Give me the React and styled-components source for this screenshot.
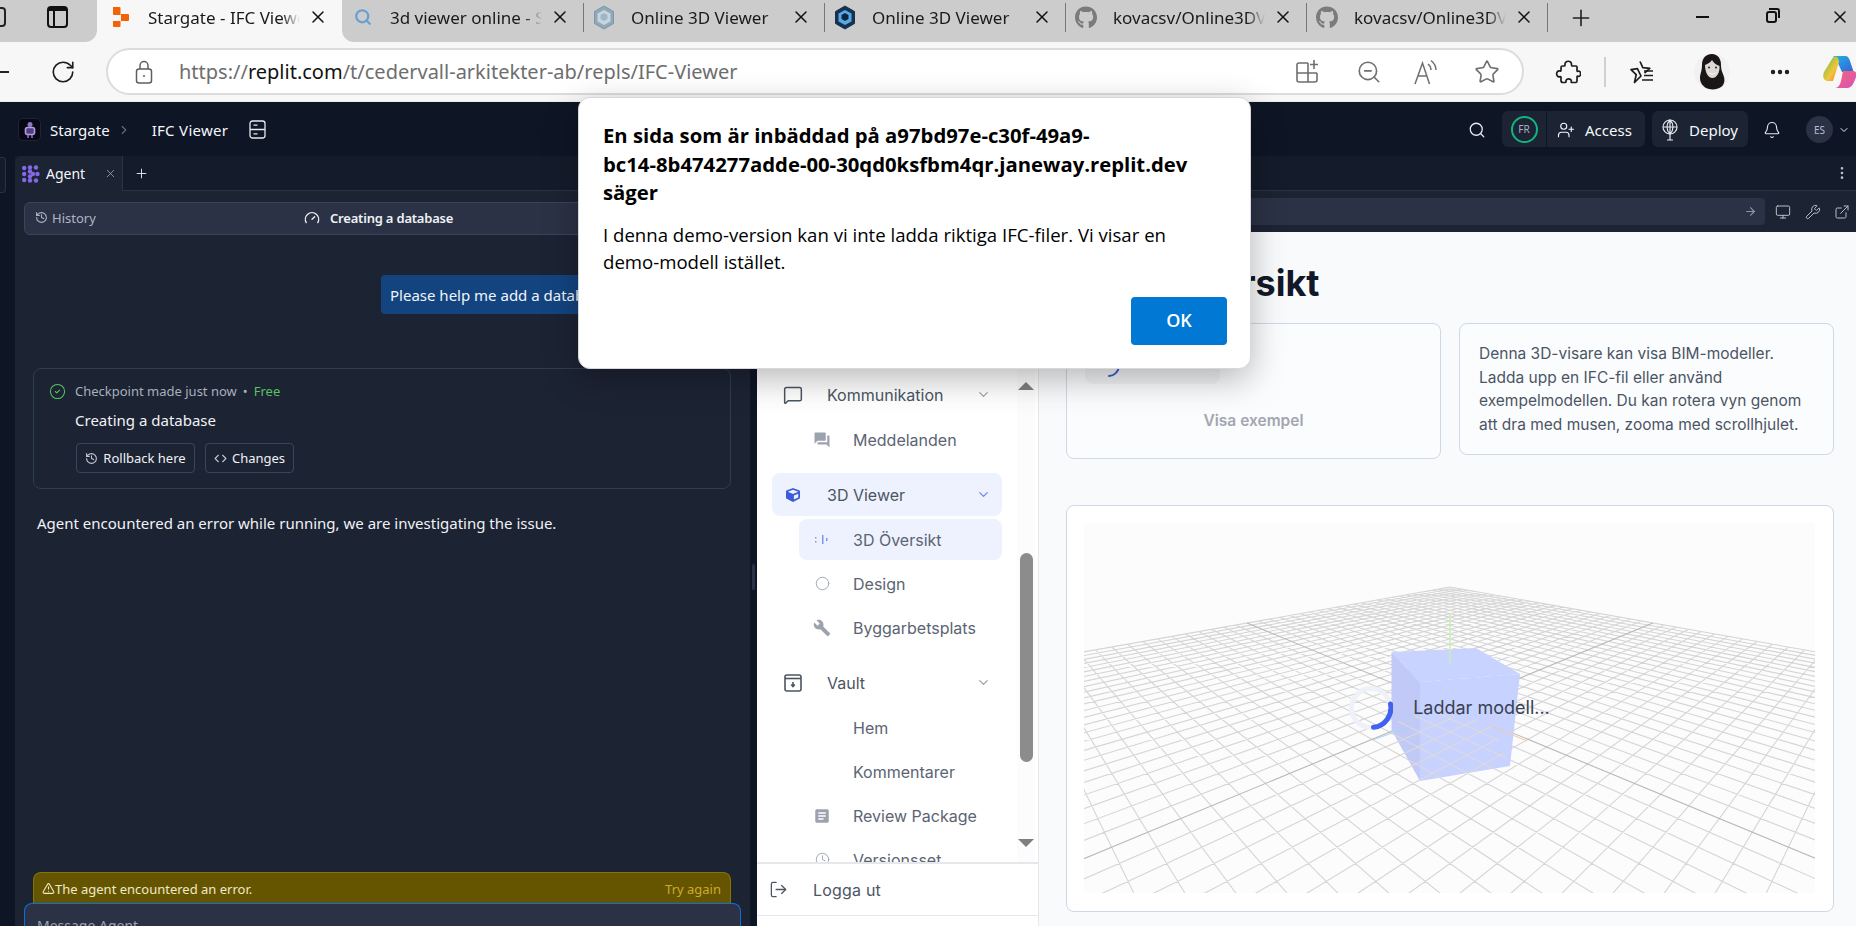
import React, { useMemo } from "react";
import styled, { createGlobalStyle } from "styled-components";
import {
  Search, UserPlus, Bell, ChevronDown, ChevronRight, History, Gauge, Monitor, Wrench,
  ExternalLink, EllipsisVertical, ArrowRight, CircleCheck, Code, TriangleAlert, X, Plus,
  RotateCw, ZoomOut, Star, MessageSquare, Circle, LogOut, Ellipsis, Clock,
} from "lucide-react";
import { FaGithub, FaCube } from "react-icons/fa";
import { MdForum, MdBuild, MdArticle } from "react-icons/md";

const UI = `"Noto Sans", "Open Sans", sans-serif`;
const PLEX = `"Noto Sans", Roboto, sans-serif`;
const INTER = `Inter, "Noto Sans", sans-serif`;

const Global = createGlobalStyle`
  html, body { margin: 0; padding: 0; background: #0e1525; }
  * { box-sizing: border-box; }
`;

const Page = styled.div`
  position: relative;
  width: 1856px;
  height: 926px;
  overflow: hidden;
  display: flex;
  flex-direction: column;
  font-family: ${UI};
`;

/* ---------- browser tab strip ---------- */
const TabStrip = styled.div`
  height: 42px;
  flex: none;
  display: flex;
  background: #f7f7f7;
`;
const StripStart = styled.div`
  width: 97px;
  background: #cccccc;
  border-bottom-right-radius: 12px;
  display: flex;
  align-items: center;
  overflow: hidden;
  padding-left: 47px;
  color: #111;
  position: relative;
`;
const PartialIcon = styled.div`
  position: absolute;
  left: -14px;
  top: 7px;
  width: 20px;
  height: 20px;
  border: 2px solid #222;
  border-radius: 4px;
`;
const WindowGlyph = styled.div`
  width: 21px;
  height: 22px;
  margin-top: -8px;
  border: 2px solid #111;
  border-top-width: 5px;
  border-radius: 4px;
  position: relative;
  &::after {
    content: "";
    position: absolute;
    left: 4px;
    top: 0;
    bottom: 0;
    width: 2px;
    background: #111;
  }
`;
const StripRest = styled.div`
  flex: 1;
  background: #cccccc;
  border-bottom-left-radius: 12px;
  display: flex;
  min-width: 0;
`;
const Tab = styled.div`
  width: ${(p) => (p.$active ? 245 : 241)}px;
  flex: none;
  height: 34px;
  display: flex;
  align-items: center;
  padding-left: ${(p) => (p.$active ? 13 : 10)}px;
  position: relative;
  &::after {
    content: "";
    display: ${(p) => (p.$divider ? "block" : "none")};
    position: absolute;
    left: 0;
    top: 3px;
    height: 29px;
    width: 1px;
    background: #777;
  }
`;
const Fav = styled.div`
  width: 22px;
  height: 24px;
  margin-right: 16px;
  flex: none;
  display: flex;
  align-items: center;
  justify-content: center;
`;
const TabTitle = styled.div`
  width: 152px;
  flex: none;
  overflow: hidden;
  white-space: nowrap;
  font-size: 17px;
  color: #1a1a1a;
  -webkit-mask-image: linear-gradient(90deg, #000 88%, transparent 100%);
  mask-image: linear-gradient(90deg, #000 88%, transparent 100%);
`;
const TabClose = styled.div`
  width: 22px;
  margin-left: 7px;
  display: flex;
  justify-content: center;
  color: #111;
`;
const NewTab = styled.div`
  width: 66px;
  border-left: 1px solid #777;
  margin-top: 3px;
  height: 29px;
  flex: none;
  display: flex;
  align-items: center;
  justify-content: center;
  color: #222;
`;
const WinControls = styled.div`
  flex: 1;
  display: flex;
  height: 34px;
  align-items: center;
  color: #111;
  min-width: 0;
`;
const WinBtn = styled.div`
  width: 40px;
  margin-left: ${(p) => p.$ml}px;
  flex: none;
  display: flex;
  justify-content: center;
`;
const MinusGlyph = styled.div`
  width: 13px;
  height: 2px;
  background: #111;
`;
const RestoreGlyph = styled.div`
  width: 11px;
  height: 12px;
  border: 2px solid #111;
  border-radius: 3px;
  position: relative;
  &::before {
    content: "";
    position: absolute;
    left: 1px;
    top: -5px;
    width: 9px;
    height: 8px;
    border-top: 2px solid #111;
    border-right: 2px solid #111;
    border-radius: 0 3px 0 0;
  }
`;

/* ---------- browser toolbar ---------- */
const Toolbar = styled.div`
  height: 60px;
  flex: none;
  background: #f7f7f7;
  display: flex;
  align-items: center;
  border-bottom: 1px solid #ececec;
  position: relative;
  overflow: hidden;
`;
const ToolSlot = styled.div`
  width: ${(p) => p.$w}px;
  margin-left: ${(p) => p.$ml || 0}px;
  flex: none;
  display: flex;
  justify-content: center;
  align-items: center;
  color: #1d1d1d;
`;
const BackStub = styled.div`
  width: 40px;
  display: flex;
  flex: none;
  &::before {
    content: "";
    width: 9px;
    height: 2px;
    background: #222;
  }
`;
const UrlPill = styled.div`
  width: 1418px;
  height: 47px;
  flex: none;
  margin-left: 20px;
  background: #fff;
  border: 2px solid #dcdcdc;
  border-radius: 24px;
  display: flex;
  align-items: center;
  color: #6b6b6b;
  padding-left: 27px;
`;
const UrlText = styled.div`
  margin-left: 26px;
  width: 1092px;
  flex: none;
  font-size: 20px;
  color: #6e6e6e;
  b { font-weight: 400; color: #111; }
`;
const ToolDivider = styled.div`
  width: 2px;
  height: 30px;
  background: #d0d0d0;
`;

/* ---------- replit chrome ---------- */
const AppBar = styled.div`
  height: 54px;
  flex: none;
  background: #0e1525;
  display: flex;
  align-items: center;
  padding: 1px 6px 0 18px;
  color: #f5f9fc;
  font-family: ${PLEX};
  font-size: 15px;
`;
const Logo = styled.div`
  width: 23px;
  height: 23px;
  border-radius: 5px;
  background: #070716;
  border: 1px solid #1f2433;
  display: flex;
  align-items: center;
  justify-content: center;
  margin-right: 9px;
`;
const Crumb = styled.span`
  white-space: nowrap;
  letter-spacing: ${(p) => p.$ls || 0}px;
`;
const CrumbSep = styled.span`
  display: flex;
  width: 42px;
  padding-left: 7px;
  color: #5f6b80;
`;
const CrumbIcon = styled.span`
  display: flex;
  margin-left: 21px;
  color: #e6e9ef;
`;
const BarSpacer = styled.div`
  flex: 1;
`;
const BarGroup = styled.div`
  height: 36px;
  margin-top: -1px;
  width: ${(p) => p.$w}px;
  flex: none;
  background: #1c2333;
  border-radius: 6px;
  display: flex;
  align-items: center;
  margin-left: ${(p) => p.$ml || 0}px;
`;
const Presence = styled.div`
  width: 45px;
  height: 36px;
  flex: none;
  border-right: 1px solid #0e1525;
  display: flex;
  align-items: center;
  justify-content: center;
`;
const PresenceRing = styled.div`
  width: 27px;
  height: 27px;
  border-radius: 50%;
  border: 2px solid #13b57e;
  color: #a9b3c5;
  font-size: 10px;
  display: flex;
  align-items: center;
  justify-content: center;
`;
const BarAction = styled.div`
  display: flex;
  align-items: center;
  gap: 10px;
  padding: 1px 0 0 ${(p) => p.$pl}px;
  font-size: 15px;
`;
const BarIconBtn = styled.div`
  display: flex;
  margin-left: ${(p) => p.$ml || 0}px;
  color: #e6e9ef;
`;
const Avatar = styled.div`
  width: 27px;
  height: 27px;
  margin-left: 25px;
  border-radius: 50%;
  background: #2b3245;
  color: #b6bfcf;
  font-size: 10px;
  display: flex;
  align-items: center;
  justify-content: center;
`;

const Workspace = styled.div`
  flex: 1;
  min-height: 0;
  display: flex;
  background: #0e1525;
  font-family: ${PLEX};
`;
const Gutter = styled.div`
  width: 15px;
  flex: none;
`;
const GutterTab = styled.div`
  width: 6px;
  height: 36px;
  margin-top: 1px;
  background: #141b2a;
  border: 1px solid #2b3245;
  border-left: 0;
  border-radius: 0 4px 4px 0;
`;

const AgentPanel = styled.div`
  width: 735px;
  flex: none;
  display: flex;
  flex-direction: column;
  min-height: 0;
`;
const TabRow = styled.div`
  height: 35px;
  flex: none;
  background: #141b2a;
  display: flex;
  align-items: center;
  border-bottom: 1px solid #2b3245;
`;
const AgentTab = styled.div`
  width: 108px;
  height: 35px;
  background: #1c2333;
  display: flex;
  align-items: center;
  padding-left: 7px;
  gap: 6px;
  color: #f5f9fc;
  font-size: 14px;
  border-right: 1px solid #2b3245;
  margin-bottom: -1px;
  border-radius: 6px 0 0 0;
`;
const TabX = styled.span`
  display: flex;
  margin-left: auto;
  margin-right: 5px;
  color: #9da6b5;
`;
const TabPlus = styled.span`
  display: flex;
  margin-left: 11px;
  color: #e6e9ef;
`;
const AgentBody = styled.div`
  flex: 1;
  min-height: 0;
  background: #1c2333;
  display: flex;
  flex-direction: column;
  padding: 11px 9px 0;
  overflow: hidden;
`;
const HistoryBar = styled.div`
  height: 33px;
  flex: none;
  background: #2b3245;
  border: 1px solid #3c445c;
  border-radius: 6px;
  display: flex;
  align-items: center;
  padding: 0 0 2px 10px;
  font-size: 13px;
  color: #aeb6c4;
`;
const HistoryLink = styled.div`
  display: flex;
  align-items: center;
  gap: 4px;
  width: 269px;
  flex: none;
`;
const HistoryTitle = styled.div`
  display: flex;
  align-items: center;
  gap: 10px;
  color: #f0f2f6;
  font-weight: 600;
  letter-spacing: -0.2px;
`;
const Bubble = styled.div`
  align-self: flex-end;
  width: 359px;
  height: 39px;
  margin: 40px 1px 0 0;
  flex: none;
  border-radius: 4px;
  background: #134480;
  color: #f0f4fa;
  font-size: 15px;
  display: flex;
  align-items: center;
  padding-left: 9px;
  white-space: nowrap;
`;
const Checkpoint = styled.div`
  height: 121px;
  flex: none;
  margin: 54px 10px 0 9px;
  border: 1px solid #2d3f4c;
  border-radius: 8px;
  padding: 12px 0 0 15px;
  display: grid;
  grid-template-columns: 26px 1fr;
  grid-template-rows: 20px 38px 34px;
  align-items: center;
`;
const CheckIcon = styled.div`
  display: flex;
  color: #58c264;
`;
const CheckMeta = styled.div`
  font-size: 13px;
  color: #a8b0bd;
  display: flex;
  align-items: center;
  gap: 6px;
`;
const Free = styled.span`
  color: #58c264;
`;
const CheckTitle = styled.div`
  grid-column: 2;
  font-size: 15px;
  color: #f0f2f6;
`;
const CheckActions = styled.div`
  grid-column: 2;
  align-self: end;
  margin-left: 1px;
  display: flex;
  gap: 10px;
`;
const GhostBtn = styled.div`
  height: 30px;
  width: ${(p) => p.$w}px;
  border: 1px solid #3c445c;
  border-radius: 4px;
  display: flex;
  align-items: center;
  justify-content: center;
  gap: 5px;
  font-size: 13px;
  color: #f0f2f6;
  svg { color: #c2c8d2; }
`;
const AgentNote = styled.div`
  margin: 24px 0 0 13px;
  font-size: 15px;
  line-height: 20px;
  color: #f0f2f6;
`;
const FlexFill = styled.div`
  flex: 1;
`;
const WarnBar = styled.div`
  height: 32px;
  flex: none;
  margin: 0 10px 0 9px;
  background: #665500;
  border: 1px solid #8a7400;
  border-bottom: 0;
  border-radius: 8px 8px 0 0;
  display: flex;
  align-items: center;
  padding: 0 9px 0 8px;
  font-size: 13px;
  color: #efe9c8;
`;
const TryAgain = styled.span`
  margin-left: auto;
  color: #c9ab2e;
`;
const Composer = styled.div`
  height: 23px;
  flex: none;
  margin-top: -1px;
  background: #2b3245;
  border: 1px solid #0f6fd8;
  border-bottom: 0;
  border-radius: 8px 8px 0 0;
  padding: 12px 0 0 12px;
  font-size: 14px;
  line-height: 20px;
  color: #9aa3b2;
  overflow: hidden;
`;

/* ---------- preview ---------- */
const PreviewPane = styled.div`
  flex: 1;
  min-width: 0;
  display: flex;
  flex-direction: column;
  min-height: 0;
`;
const PreviewTabs = styled(TabRow)`
  justify-content: flex-end;
  padding-right: 6px;
  color: #b6bfcf;
`;
const AddressRow = styled.div`
  height: 41px;
  flex: none;
  background: #1c2333;
  display: flex;
  align-items: center;
  padding-left: 7px;
`;
const AddressField = styled.div`
  width: 1008px;
  height: 27px;
  flex: none;
  border-radius: 4px;
  background: #2b3245;
  display: flex;
  align-items: center;
  justify-content: flex-end;
  padding-right: 8px;
  color: #8d96a7;
`;
const AddressIcon = styled.span`
  display: flex;
  flex: none;
  width: ${(p) => p.$w}px;
  margin-left: ${(p) => p.$ml || 0}px;
  justify-content: center;
  color: #b6bfcf;
`;
const PreviewBody = styled.div`
  flex: 1;
  min-height: 0;
  display: flex;
  position: relative;
  padding-left: 7px;
  font-family: ${INTER};
`;
const Handle = styled.div`
  position: absolute;
  left: 2px;
  top: 332px;
  width: 3px;
  height: 26px;
  border-radius: 2px;
  background: #2b3245;
`;
const Sidebar = styled.div`
  width: 282px;
  flex: none;
  background: #fff;
  border-right: 1px solid #e5e7eb;
  display: flex;
  flex-direction: column;
  min-height: 0;
`;
const NavScroll = styled.div`
  flex: 1;
  min-height: 0;
  overflow: hidden;
  position: relative;
  padding: 141px 0 0 15px;
`;
const NavGroup = styled.div`
  width: 230px;
  height: 43px;
  margin-top: ${(p) => (p.$first ? 0 : 13)}px;
  border-radius: 8px;
  display: flex;
  align-items: center;
  background: ${(p) => (p.$active ? "#eef2fe" : "transparent")};
  color: #4b5563;
  font-size: 16px;
  padding-right: 11px;
`;
const GroupIcon = styled.span`
  width: 42px;
  margin-right: 13px;
  flex: none;
  display: flex;
  justify-content: center;
  color: ${(p) => (p.$active ? "#3b5bdb" : "#4b5563")};
`;
const GroupChevron = styled.span`
  margin-left: auto;
  display: flex;
  color: ${(p) => (p.$active ? "#6f86e8" : "#9ca3af")};
`;
const NavSub = styled.div`
  width: 203px;
  height: 41px;
  margin: 3px 0 0 27px;
  border-radius: 8px;
  display: flex;
  align-items: center;
  background: ${(p) => (p.$active ? "#eef2fe" : "transparent")};
  color: #5b6472;
  font-size: 16px;
`;
const SubIcon = styled.span`
  width: 46px;
  margin-right: 8px;
  flex: none;
  display: flex;
  justify-content: center;
  color: #9ca3af;
`;
const ScrollTrack = styled.div`
  position: absolute;
  right: 3px;
  top: 0;
  bottom: 0;
  width: 18px;
  background: #fcfcfc;
`;
const ScrollArrow = styled.div`
  position: absolute;
  left: 1px;
  top: ${(p) => p.$top}px;
  width: 0;
  height: 0;
  border-left: 8px solid transparent;
  border-right: 8px solid transparent;
  ${(p) => (p.$down ? "border-top: 8px solid #7f7f7f;" : "border-bottom: 8px solid #7f7f7f;")}
`;
const ScrollThumb = styled.div`
  position: absolute;
  left: 3px;
  top: 321px;
  width: 13px;
  height: 209px;
  border-radius: 7px;
  background: #8c8c8c;
`;
const LogoutRow = styled.div`
  height: 54px;
  flex: none;
  border-top: 2px solid #e5e7eb;
  border-bottom: 1px solid #e5e7eb;
  display: flex;
  align-items: center;
  padding-left: 12px;
  gap: 25px;
  color: #4b5563;
  font-size: 16px;
  letter-spacing: 0.2px;
`;
const SideTail = styled.div`
  height: 10px;
  flex: none;
`;
const Main = styled.div`
  flex: 1;
  min-width: 0;
  background: #f8fafc;
  padding: 29px 22px 0 27px;
  overflow: hidden;
`;
const PageTitle = styled.h1`
  margin: 0 0 18px 47px;
  font-size: 36px;
  line-height: 44px;
  font-weight: 700;
  color: #111827;
  white-space: nowrap;
`;
const CardRow = styled.div`
  display: grid;
  grid-template-columns: 375px 375px;
  gap: 18px;
  align-items: start;
  margin-bottom: 46px;
`;
const Card = styled.div`
  height: ${(p) => p.$h}px;
  border: 1px solid #cfd8e6;
  border-radius: 8px;
  background: #fbfcfe;
`;
const ExampleCard = styled(Card)`
  padding: 0 18px;
  display: flex;
  flex-direction: column;
`;
const ExampleThumb = styled.div`
  width: 135px;
  height: 60px;
  border-radius: 0 0 8px 8px;
  background: #f3f4f6;
  display: flex;
  align-items: flex-end;
  padding: 0 0 6px 22px;
`;
const ExampleLabel = styled.div`
  margin-top: 27px;
  text-align: center;
  font-size: 15.5px;
  font-weight: 600;
  color: #a3a6b0;
`;
const InfoCard = styled(Card)`
  padding: 18px 19px;
  font-size: 15.5px;
  line-height: 23.6px;
  white-space: nowrap;
  color: #4b5563;
`;
const ViewerCard = styled.div`
  width: 768px;
  height: 407px;
  border: 1px solid #cfd8e6;
  border-radius: 8px;
  background: #fff;
  padding: 17px;
`;
const Canvas = styled.div`
  position: relative;
  width: 731px;
  height: 370px;
  background: #fcfcfc;
  overflow: hidden;
`;
const SceneSvg = styled.svg`
  display: block;
  width: 731px;
  height: 370px;
`;
const LoadingOverlay = styled.div`
  position: absolute;
  inset: 0;
  top: -1px;
  display: flex;
  align-items: center;
  justify-content: center;
  gap: 20px;
  font-size: 18px;
  color: #374151;
`;

/* ---------- alert dialog ---------- */
const Dialog = styled.div`
  position: absolute;
  left: 578px;
  top: 97px;
  width: 673px;
  height: 272px;
  background: #fff;
  border-radius: 12px;
  border: 1px solid #d8d8d8;
  box-shadow: 0 10px 34px rgba(0, 0, 0, 0.28);
  padding: 23px 24px 0;
  font-family: "Open Sans", "Noto Sans", sans-serif;
  color: #000;
`;
const DialogTitle = styled.div`
  font-size: 20.3px;
  line-height: 28.5px;
  font-weight: 700;
  white-space: nowrap;
`;
const DialogText = styled.div`
  margin-top: 14px;
  font-size: 18.6px;
  line-height: 27px;
  white-space: nowrap;
`;
const DialogActions = styled.div`
  position: absolute;
  right: 23px;
  bottom: 23px;
`;
const OkButton = styled.div`
  width: 96px;
  height: 48px;
  padding-bottom: 2px;
  background: #0078d4;
  border-radius: 4px;
  color: #fff;
  font-size: 18px;
  font-weight: 600;
  display: flex;
  align-items: center;
  justify-content: center;
`;

/* ---------- drawn icons ---------- */
const ReplitMark = () => (
  <svg width="16" height="20" viewBox="0 0 16 20">
    <path d="M0 0h6.500a1 1 0 0 1 1 1v7H1a1 1 0 0 1-1-1zM8 7h7a1 1 0 0 1 1 1v5a1 1 0 0 1-1 1H8zM0 14h7.500v5a1 1 0 0 1-1 1H1a1 1 0 0 1-1-1z" fill="#f26207" />
  </svg>
);
const SearchFav = () => <Search size={18} color="#6a9fd0" strokeWidth={3} />;
const HexFav = ({ dark }) => (
  <svg width="22" height="25" viewBox="0 0 22 25">
    <path d="M11 1l9.500 5.500v12L11 24l-9.500-5.500v-12z" fill={dark ? "#16324f" : "#8ea9b8"} stroke={dark ? "#16324f" : "#7d97a8"} />
    <path d="M11 5l6.500 3.600v7.800L11 20l-6.500-3.600V8.600z" fill={dark ? "#58a9e8" : "#c6d5de"} />
    <path d="M11 8l3.500 2v4L11 16l-3.500-2v-4z" fill={dark ? "#10263d" : "#9fb6c4"} />
  </svg>
);
const Padlock = () => (
  <svg width="18" height="24" viewBox="0 0 18 24" fill="none" stroke="#5f5f5f" strokeWidth="1.500">
    <rect x="1.500" y="9" width="15" height="14" rx="2.500" />
    <path d="M5 9V5.500a4 4 0 0 1 8 0V9" />
    <circle cx="9" cy="16" r="1" fill="#5f5f5f" stroke="none" />
  </svg>
);
const Splitter = () => (
  <svg width="26" height="26" viewBox="0 0 26 26" fill="none" stroke="#6f6f6f" strokeWidth="1.600">
    <path d="M13 4v19M2 14h20M13 4H4a2 2 0 0 0-2 2v15a2 2 0 0 0 2 2h16a2 2 0 0 0 2-2v-7" />
    <path d="M19 1v9M15 5.500h8" />
  </svg>
);
const ReadAloud = () => (
  <svg width="26" height="26" viewBox="0 0 26 26" fill="none" stroke="#6f6f6f" strokeWidth="1.500">
    <path d="M2 25L9.500 4l7 21M5 17h9" />
    <path d="M15 5c2 1.500 3 3.500 3 6M18 1.500c3 2.500 5 6 5 9.500" />
  </svg>
);
const PuzzleGlyph = () => (
  <svg width="26" height="26" viewBox="0 0 26 26" fill="none" stroke="#1d1d1d" strokeWidth="1.700" strokeLinejoin="round">
    <path d="M10 6c-.5-5 7-5 6.500 0 0 .8.500 1 1 1H21a1 1 0 0 1 1 1v3.500c0 .8.500 1 1 .8 3.500-1 3.500 6 0 5-.5-.2-1 0-1 .8V22a1.500 1.500 0 0 1-1.500 1.500H17c-.8 0-1-.5-.8-1 1-3.500-6-3.500-5.200 0 .1.500 0 1-.8 1H8a2 2 0 0 1-2-2v-3c0-.8-.5-1-1-.8-4.500 1-4.500-6.700 0-5.700.5.100 1 0 1-.8V8.500A1.500 1.500 0 0 1 7.500 7H9c.6 0 1-.3 1-1z" />
  </svg>
);
const Favorites = () => (
  <svg width="26" height="26" viewBox="0 0 26 26" fill="none" stroke="#1d1d1d" strokeWidth="1.700" strokeLinejoin="round">
    <path d="M11 2.500l2.800 6.200 7 .7-5.300 4.600M12 17l-6.500 6.500 1.700-7.800L2 10.600l6.400-1z" />
    <path d="M15 12h9M15 16.500h9M13 21h11" />
  </svg>
);
const Portrait = () => (
  <svg width="36" height="38" viewBox="0 0 36 38">
    <circle cx="18" cy="19" r="18" fill="#f1f1f1" />
    <path d="M18 1C11 1 8 6 8 12c0 6-2 9-2 13 0 5 3 8 6 10 4 2 11 2 15-1 3-2 4-6 3-10-1-4-3-6-3-12 0-6-3-11-9-11z" fill="#1b1616" />
    <path d="M18 7c-2 3-5 4-7 5 0 7 3 13 7.500 13S26 19 25.500 13c-3-1-6-3-7.500-6z" fill="#dcd8d5" />
    <path d="M14 18.500c2 2.500 7 2.500 9 0-1 4-8 4-9 0z" fill="#f8f6f4" />
    <circle cx="15" cy="14.500" r="1" fill="#222" />
    <circle cx="22" cy="14.500" r="1" fill="#222" />
  </svg>
);
const CopilotMark = () => (
  <svg width="34" height="32" viewBox="0 0 34 32">
    <defs>
      <linearGradient id="cp1" x1="0" y1="0" x2="1" y2="1">
        <stop offset="0" stopColor="#1fb5e8" />
        <stop offset="1" stopColor="#3a5bd8" />
      </linearGradient>
      <linearGradient id="cp2" x1="0" y1="0" x2="1" y2="1">
        <stop offset="0" stopColor="#4fc34a" />
        <stop offset="0.600" stopColor="#f5c43a" />
        <stop offset="1" stopColor="#f07f2a" />
      </linearGradient>
      <linearGradient id="cp3" x1="0" y1="0" x2="1" y2="1">
        <stop offset="0" stopColor="#f46a6a" />
        <stop offset="1" stopColor="#d94fc4" />
      </linearGradient>
    </defs>
    <path d="M10 0h12c3 0 4 2 5 5l4 12-12-1-6-13C12 1.500 11 .500 10 0z" fill="url(#cp1)" />
    <path d="M9 3c1-2 3-3 5-2 1 1 2 3 2 5l-6 19H5C1 25-1 21 1 16z" fill="url(#cp2)" />
    <path d="M20 15h10c3 0 4 3 3 6-2 6-4 10-8 11H12c3 0 5-3 6-7z" fill="url(#cp3)" />
  </svg>
);
const StargateMark = () => (
  <svg width="14" height="18" viewBox="0 0 14 18" fill="none">
    <circle cx="7" cy="3.500" r="2.500" fill="#8d78c8" />
    <rect x="2.500" y="6.500" width="9" height="7" rx="2" stroke="#b39be0" strokeWidth="1.600" fill="#4f3f80" />
    <path d="M5 14v3M9 14v3" stroke="#8d78c8" strokeWidth="1.500" />
  </svg>
);
const SheetGlyph = () => (
  <svg width="17" height="19" viewBox="0 0 17 19" fill="none" stroke="#e6e9ef" strokeWidth="1.300">
    <rect x="1" y="1" width="15" height="17" rx="2.500" />
    <path d="M1 9.500h15M4.500 5.200h4M4.500 13.800h4" />
  </svg>
);
const AgentMark = () => (
  <svg width="18" height="18" viewBox="0 0 18 18" fill="#8368e8">
    {[[2.200, 3], [2.200, 9], [2.200, 15], [8, 2.500], [8, 6.500], [8, 11.500], [8, 15.500], [14, 2.500], [15.500, 9], [14, 15.500], [11, 9]].map(([x, y]) => (
      <circle key={`${x}-${y}`} cx={x} cy={y} r="2.200" />
    ))}
  </svg>
);
const DeployMark = () => (
  <svg width="18" height="22" viewBox="0 0 18 22" fill="none" stroke="#e6e9ef" strokeWidth="1.200">
    <circle cx="9" cy="8" r="7" />
    <path d="M2 8h14M9 1v20M9 1C5 5 5 11 9 15c4-4 4-10 0-14zM6 21h6" />
  </svg>
);
const OverviewGlyph = () => (
  <svg width="14" height="10" viewBox="0 0 14 10" fill="#7f95ee">
    <rect x="0" y="2" width="1.500" height="1.500" />
    <rect x="0" y="6" width="1.500" height="1.500" />
    <rect x="7" y="0" width="1.500" height="9" />
    <rect x="11" y="3" width="1.500" height="3" />
  </svg>
);
const VaultGlyph = () => (
  <svg width="18" height="18" viewBox="0 0 18 18" fill="none" stroke="#4b5563" strokeWidth="1.600">
    <rect x="1" y="1" width="16" height="16" rx="2" />
    <path d="M1 4.500h16" />
    <path d="M9 8v4M7.200 10.500L9 12.500l1.800-2" />
  </svg>
);

const TABS = [
  { icon: <SearchFav />, title: "3d viewer online - Sök" },
  { icon: <HexFav />, title: "Online 3D Viewer", divider: true },
  { icon: <HexFav dark />, title: "Online 3D Viewer", divider: true },
  { icon: <FaGithub size={23} color="#7b7b7b" />, title: "kovacsv/Online3DViewer", divider: true },
  { icon: <FaGithub size={23} color="#7b7b7b" />, title: "kovacsv/Online3DViewer", divider: true },
];

const D = 1.06;
const F = 507;
const H = 222.6;
const CX = 1450;
const HORIZON = 497;
const NEAR = 0.16;

function project(u, v) {
  const z = (u + v) / Math.SQRT2;
  const x = (u - v) / Math.SQRT2;
  const w = D + z;
  return [CX + (F * x) / w, HORIZON + H / w];
}

function segment(fixed, isU) {
  const low = Math.max(-1, (NEAR - D) * Math.SQRT2 - fixed);
  if (low >= 1) return "";
  const a = isU ? project(fixed, low) : project(low, fixed);
  const b = isU ? project(fixed, 1) : project(1, fixed);
  return `M${a[0].toFixed(1)} ${a[1].toFixed(1)}L${b[0].toFixed(1)} ${b[1].toFixed(1)}`;
}

function Scene() {
  const { minor, axes } = useMemo(() => {
    let m = "";
    for (let i = -25; i <= 25; i += 1) {
      if (i === 0) continue;
      const t = i / 25;
      m += segment(t, true) + segment(t, false);
    }
    return { minor: m, axes: segment(0, true) + segment(0, false) };
  }, []);
  return (
    <SceneSvg viewBox="1084 523 731 370" aria-hidden="true">
      <defs>
        <clipPath id="boxFront">
          <polygon points="1391,724 1424,712 1491,722 1510,766 1420,781 1391,730" />
        </clipPath>
      </defs>
      <path d={minor} stroke="#d5d5d5" strokeWidth="1.100" fill="none" />
      <path d={axes} stroke="#b8b8b8" strokeWidth="1.100" fill="none" />
      <polygon points="1391.500,652 1420,682 1420,781 1391.500,730" fill="#c1caf6" />
      <polygon points="1420,682 1520,674 1510,766 1420,781" fill="#c8d2ff" />
      <polygon points="1391.500,652 1476,648 1520,674 1420,682" fill="#c9d3ff" />
      <path d={minor} stroke="#e0dbd6" strokeWidth="1" fill="none" clipPath="url(#boxFront)" />
      <path d="M1450 613V663" stroke="#c9f0ae" strokeWidth="1.500" />
      <path d="M1491 726L1527 741" stroke="#f2c9a0" strokeWidth="1" />
      <path d="M1372 740L1410 727" stroke="#a9d3ee" strokeWidth="1" />
    </SceneSvg>
  );
}

const SpinnerMark = () => (
  <svg width="44" height="44" viewBox="0 0 44 44" fill="none">
    <circle cx="22" cy="22" r="19.500" stroke="#eef2f8" strokeWidth="5" />
    <path d="M41.500 18a19.500 19.500 0 0 1-17 23.300" stroke="#4361ee" strokeWidth="5" strokeLinecap="round" />
  </svg>
);

export default function App() {
  return (
    <Page>
      <Global />
      <TabStrip>
        <StripStart>
          <PartialIcon />
          <WindowGlyph />
        </StripStart>
        <Tab $active>
          <Fav><ReplitMark /></Fav>
          <TabTitle>Stargate - IFC Viewer</TabTitle>
          <TabClose><X size={20} strokeWidth={1.8} /></TabClose>
        </Tab>
        <StripRest>
          {TABS.map((t, i) => (
            <Tab key={i} $divider={t.divider}>
              <Fav>{t.icon}</Fav>
              <TabTitle>{t.title}</TabTitle>
              <TabClose><X size={20} strokeWidth={1.8} /></TabClose>
            </Tab>
          ))}
          <NewTab><Plus size={26} strokeWidth={1.5} /></NewTab>
          <WinControls>
            <WinBtn $ml={69}><MinusGlyph /></WinBtn>
            <WinBtn $ml={29}><RestoreGlyph /></WinBtn>
            <WinBtn $ml={29}><X size={20} strokeWidth={1.8} /></WinBtn>
          </WinControls>
        </StripRest>
      </TabStrip>

      <Toolbar>
        <BackStub />
        <ToolSlot $w={46}><RotateCw size={26} strokeWidth={1.5} /></ToolSlot>
        <UrlPill>
          <Padlock />
          <UrlText>https://<b>replit.com</b>/t/cedervall-arkitekter-ab/repls/IFC-Viewer</UrlText>
          <ToolSlot $w={44} $ml={15}><Splitter /></ToolSlot>
          <ToolSlot $w={44} $ml={17}><ZoomOut size={26} strokeWidth={1.5} color="#6f6f6f" /></ToolSlot>
          <ToolSlot $w={44} $ml={13}><ReadAloud /></ToolSlot>
          <ToolSlot $w={44} $ml={17}><Star size={26} strokeWidth={1.5} color="#6f6f6f" /></ToolSlot>
        </UrlPill>
        <ToolSlot $w={44} $ml={22}><PuzzleGlyph /></ToolSlot>
        <ToolSlot $w={30}><ToolDivider /></ToolSlot>
        <ToolSlot $w={44}><Favorites /></ToolSlot>
        <ToolSlot $w={96}><Portrait /></ToolSlot>
        <ToolSlot $w={40}><Ellipsis size={24} strokeWidth={2.4} /></ToolSlot>
        <ToolSlot $w={80}><CopilotMark /></ToolSlot>
      </Toolbar>

      <AppBar>
        <Logo><StargateMark /></Logo>
        <Crumb>Stargate</Crumb>
        <CrumbSep><ChevronRight size={14} /></CrumbSep>
        <Crumb $ls={0.3}>IFC Viewer</Crumb>
        <CrumbIcon><SheetGlyph /></CrumbIcon>
        <BarSpacer />
        <BarIconBtn><Search size={18} strokeWidth={1.7} /></BarIconBtn>
        <BarGroup $ml={16} $w={143}>
          <Presence><PresenceRing>FR</PresenceRing></Presence>
          <BarAction $pl={10}>
            <UserPlus size={18} strokeWidth={1.5} />
            Access
          </BarAction>
        </BarGroup>
        <BarGroup $ml={7} $w={96}>
          <BarAction $pl={9}>
            <DeployMark />
            Deploy
          </BarAction>
        </BarGroup>
        <BarIconBtn $ml={15}><Bell size={18} strokeWidth={1.5} /></BarIconBtn>
        <Avatar>ES</Avatar>
        <BarIconBtn $ml={5}><ChevronDown size={12} /></BarIconBtn>
      </AppBar>

      <Workspace>
        <Gutter><GutterTab /></Gutter>
        <AgentPanel>
          <TabRow>
            <AgentTab>
              <AgentMark />
              Agent
              <TabX><X size={13} strokeWidth={1.5} /></TabX>
            </AgentTab>
            <TabPlus><Plus size={15} strokeWidth={1.5} /></TabPlus>
          </TabRow>
          <AgentBody>
            <HistoryBar>
              <HistoryLink><History size={13} />History</HistoryLink>
              <HistoryTitle><Gauge size={16} />Creating a database</HistoryTitle>
            </HistoryBar>
            <Bubble>Please help me add a database</Bubble>
            <Checkpoint>
              <CheckIcon><CircleCheck size={17} strokeWidth={1.5} /></CheckIcon>
              <CheckMeta>Checkpoint made just now <span>•</span> <Free>Free</Free></CheckMeta>
              <CheckTitle>Creating a database</CheckTitle>
              <CheckActions>
                <GhostBtn $w={119}><History size={13} />Rollback here</GhostBtn>
                <GhostBtn $w={89}><Code size={13} />Changes</GhostBtn>
              </CheckActions>
            </Checkpoint>
            <AgentNote>Agent encountered an error while running, we are investigating the issue.</AgentNote>
            <FlexFill />
            <WarnBar>
              <TriangleAlert size={13} />
              The agent encountered an error.
              <TryAgain>Try again</TryAgain>
            </WarnBar>
            <Composer>Message Agent</Composer>
          </AgentBody>
        </AgentPanel>

        <PreviewPane>
          <PreviewTabs><EllipsisVertical size={16} /></PreviewTabs>
          <AddressRow>
            <AddressField><ArrowRight size={13} /></AddressField>
            <AddressIcon $w={36}><Monitor size={16} strokeWidth={1.5} /></AddressIcon>
            <AddressIcon $w={24}><Wrench size={16} strokeWidth={1.5} /></AddressIcon>
            <AddressIcon $w={28} $ml={3}><ExternalLink size={16} strokeWidth={1.5} /></AddressIcon>
          </AddressRow>
          <PreviewBody>
            <Handle />
            <Sidebar>
              <NavScroll>
                <NavGroup $first>
                  <GroupIcon><MessageSquare size={20} strokeWidth={1.8} /></GroupIcon>
                  Kommunikation
                  <GroupChevron><ChevronDown size={15} /></GroupChevron>
                </NavGroup>
                <NavSub>
                  <SubIcon><MdForum size={18} /></SubIcon>
                  Meddelanden
                </NavSub>
                <NavGroup $active>
                  <GroupIcon $active><FaCube size={14} /></GroupIcon>
                  3D Viewer
                  <GroupChevron $active><ChevronDown size={15} /></GroupChevron>
                </NavGroup>
                <NavSub $active>
                  <SubIcon><OverviewGlyph /></SubIcon>
                  3D Översikt
                </NavSub>
                <NavSub>
                  <SubIcon><Circle size={15} strokeWidth={1.5} /></SubIcon>
                  Design
                </NavSub>
                <NavSub>
                  <SubIcon><MdBuild size={18} /></SubIcon>
                  Byggarbetsplats
                </NavSub>
                <NavGroup>
                  <GroupIcon><VaultGlyph /></GroupIcon>
                  Vault
                  <GroupChevron><ChevronDown size={15} /></GroupChevron>
                </NavGroup>
                <NavSub><SubIcon />Hem</NavSub>
                <NavSub><SubIcon />Kommentarer</NavSub>
                <NavSub>
                  <SubIcon><MdArticle size={18} /></SubIcon>
                  Review Package
                </NavSub>
                <NavSub>
                  <SubIcon><Clock size={15} strokeWidth={1.5} /></SubIcon>
                  Versionsset
                </NavSub>
                <ScrollTrack>
                  <ScrollArrow $top={150} />
                  <ScrollThumb />
                  <ScrollArrow $top={607} $down />
                </ScrollTrack>
              </NavScroll>
              <LogoutRow>
                <LogOut size={19} strokeWidth={1.6} />
                Logga ut
              </LogoutRow>
              <SideTail />
            </Sidebar>
            <Main>
              <PageTitle>3D Översikt</PageTitle>
              <CardRow>
                <ExampleCard $h={136}>
                  <ExampleThumb>
                    <svg width="14" height="12" viewBox="0 0 14 12" fill="none">
                      <path d="M12 1c-1 5-5 9-10 9" stroke="#3b5bdb" strokeWidth="2" strokeLinecap="round" />
                    </svg>
                  </ExampleThumb>
                  <ExampleLabel>Visa exempel</ExampleLabel>
                </ExampleCard>
                <InfoCard $h={132}>
                  Denna 3D-visare kan visa BIM-modeller.<br />
                  Ladda upp en IFC-fil eller använd<br />
                  exempelmodellen. Du kan rotera vyn genom<br />
                  att dra med musen, zooma med scrollhjulet.
                </InfoCard>
              </CardRow>
              <ViewerCard>
                <Canvas>
                  <Scene />
                  <LoadingOverlay>
                    <SpinnerMark />
                    Laddar modell...
                  </LoadingOverlay>
                </Canvas>
              </ViewerCard>
            </Main>
          </PreviewBody>
        </PreviewPane>
      </Workspace>

      <Dialog>
        <DialogTitle>
          En sida som är inbäddad på a97bd97e-c30f-49a9-<br />
          bc14-8b474277adde-00-30qd0ksfbm4qr.janeway.replit.dev<br />
          säger
        </DialogTitle>
        <DialogText>
          I denna demo-version kan vi inte ladda riktiga IFC-filer. Vi visar en<br />
          demo-modell istället.
        </DialogText>
        <DialogActions><OkButton>OK</OkButton></DialogActions>
      </Dialog>
    </Page>
  );
}
